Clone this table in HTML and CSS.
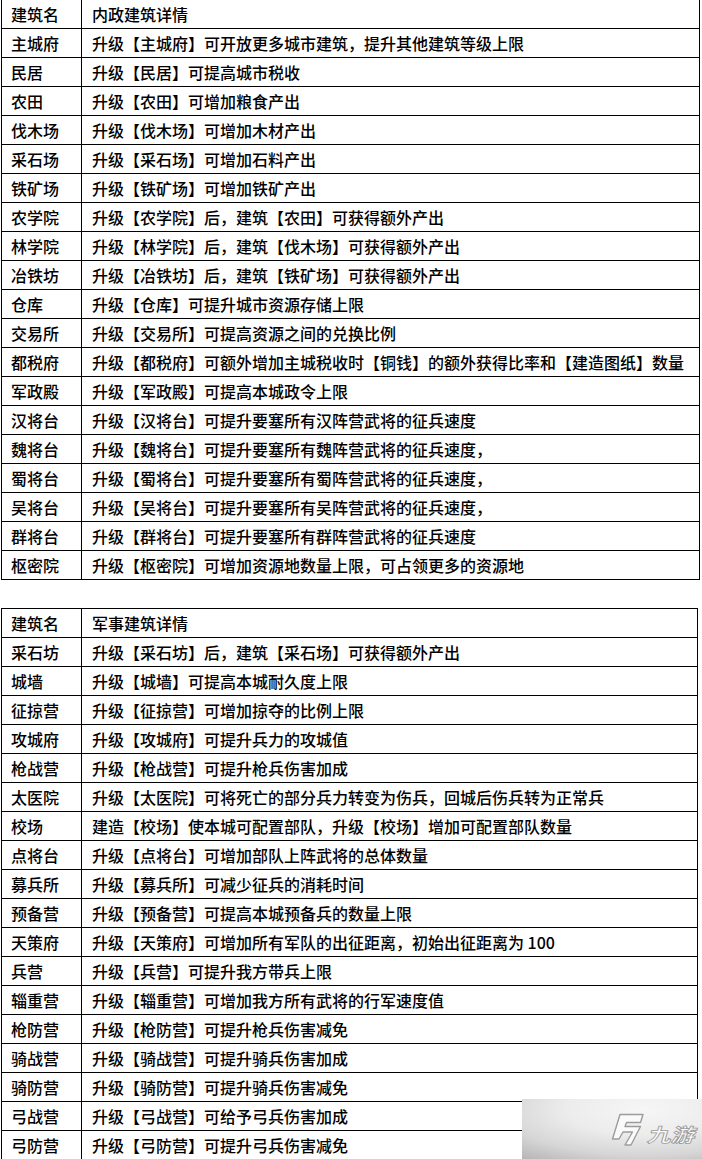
FILE: index.html
```html
<!DOCTYPE html>
<html lang="zh-CN">
<head>
<meta charset="utf-8">
<title>建筑详情</title>
<link rel="stylesheet" href="styles.css">
</head>
<body>
<div class="page">
  <table class="grid grid-first">
    <colgroup><col class="c-name"><col class="c-desc"></colgroup>
    <tbody>
      <tr><td>建筑名</td><td>内政建筑详情</td></tr>
      <tr><td>主城府</td><td>升级【主城府】可开放更多城市建筑，提升其他建筑等级上限</td></tr>
      <tr><td>民居</td><td>升级【民居】可提高城市税收</td></tr>
      <tr><td>农田</td><td>升级【农田】可增加粮食产出</td></tr>
      <tr><td>伐木场</td><td>升级【伐木场】可增加木材产出</td></tr>
      <tr><td>采石场</td><td>升级【采石场】可增加石料产出</td></tr>
      <tr><td>铁矿场</td><td>升级【铁矿场】可增加铁矿产出</td></tr>
      <tr><td>农学院</td><td>升级【农学院】后，建筑【农田】可获得额外产出</td></tr>
      <tr><td>林学院</td><td>升级【林学院】后，建筑【伐木场】可获得额外产出</td></tr>
      <tr><td>冶铁坊</td><td>升级【冶铁坊】后，建筑【铁矿场】可获得额外产出</td></tr>
      <tr><td>仓库</td><td>升级【仓库】可提升城市资源存储上限</td></tr>
      <tr><td>交易所</td><td>升级【交易所】可提高资源之间的兑换比例</td></tr>
      <tr><td>都税府</td><td>升级【都税府】可额外增加主城税收时【铜钱】的额外获得比率和【建造图纸】数量</td></tr>
      <tr><td>军政殿</td><td>升级【军政殿】可提高本城政令上限</td></tr>
      <tr><td>汉将台</td><td>升级【汉将台】可提升要塞所有汉阵营武将的征兵速度</td></tr>
      <tr><td>魏将台</td><td>升级【魏将台】可提升要塞所有魏阵营武将的征兵速度，</td></tr>
      <tr><td>蜀将台</td><td>升级【蜀将台】可提升要塞所有蜀阵营武将的征兵速度，</td></tr>
      <tr><td>吴将台</td><td>升级【吴将台】可提升要塞所有吴阵营武将的征兵速度，</td></tr>
      <tr><td>群将台</td><td>升级【群将台】可提升要塞所有群阵营武将的征兵速度</td></tr>
      <tr><td>枢密院</td><td>升级【枢密院】可增加资源地数量上限，可占领更多的资源地</td></tr>
    </tbody>
  </table>

  <table class="grid grid-second">
    <colgroup><col class="c-name"><col class="c-desc"></colgroup>
    <tbody>
      <tr><td>建筑名</td><td>军事建筑详情</td></tr>
      <tr><td>采石坊</td><td>升级【采石坊】后，建筑【采石场】可获得额外产出</td></tr>
      <tr><td>城墙</td><td>升级【城墙】可提高本城耐久度上限</td></tr>
      <tr><td>征掠营</td><td>升级【征掠营】可增加掠夺的比例上限</td></tr>
      <tr><td>攻城府</td><td>升级【攻城府】可提升兵力的攻城值</td></tr>
      <tr><td>枪战营</td><td>升级【枪战营】可提升枪兵伤害加成</td></tr>
      <tr><td>太医院</td><td>升级【太医院】可将死亡的部分兵力转变为伤兵，回城后伤兵转为正常兵</td></tr>
      <tr><td>校场</td><td>建造【校场】使本城可配置部队，升级【校场】增加可配置部队数量</td></tr>
      <tr><td>点将台</td><td>升级【点将台】可增加部队上阵武将的总体数量</td></tr>
      <tr><td>募兵所</td><td>升级【募兵所】可减少征兵的消耗时间</td></tr>
      <tr><td>预备营</td><td>升级【预备营】可提高本城预备兵的数量上限</td></tr>
      <tr><td>天策府</td><td>升级【天策府】可增加所有军队的出征距离，初始出征距离为 100</td></tr>
      <tr><td>兵营</td><td>升级【兵营】可提升我方带兵上限</td></tr>
      <tr><td>辎重营</td><td>升级【辎重营】可增加我方所有武将的行军速度值</td></tr>
      <tr><td>枪防营</td><td>升级【枪防营】可提升枪兵伤害减免</td></tr>
      <tr><td>骑战营</td><td>升级【骑战营】可提升骑兵伤害加成</td></tr>
      <tr><td>骑防营</td><td>升级【骑防营】可提升骑兵伤害减免</td></tr>
      <tr><td>弓战营</td><td>升级【弓战营】可给予弓兵伤害加成</td></tr>
      <tr><td>弓防营</td><td>升级【弓防营】可提升弓兵伤害减免</td></tr>
    </tbody>
  </table>

  <div class="watermark">
    <svg class="wm-icon" width="34" height="34" viewBox="0 0 34 34">
      <path d="M9 1.5 L32 1.5 L29.5 9.5 L15.5 9.5 L14 13.5 L29.5 13.5 L20 32 L14 32 L21.5 19 L12 19 L8 26 L1.5 26 Z" fill="#fafafa" stroke="#9c9c9c" stroke-width="1.4" stroke-linejoin="round"/>
    </svg>
    <span class="wm-text">九游</span>
  </div>
</div>
</body>
</html>
```

FILE: styles.css
```css
html, body {
  margin: 0;
  padding: 0;
  background: #ffffff;
}

body {
  font-family: "Noto Sans CJK SC", "Noto Sans", sans-serif;
  font-size: 16px;
  font-weight: 500;
  color: #000000;
}

.page {
  position: relative;
  width: 702px;
  height: 1159px;
  overflow: hidden;
}

.grid {
  border-collapse: separate;
  border-spacing: 0;
  table-layout: fixed;
  border-left: 1px solid #000;
  border-top: 1px solid #000;
  margin-left: 1px;
}

.grid-first {
  width: 699px;
  margin-top: -1px;
}

.grid-second {
  width: 697px;
  margin-top: 28px;
}

.c-name {
  width: 80px;
}

.grid td {
  border-right: 1px solid #000;
  border-bottom: 1px solid #000;
  height: 28px;
  padding: 0 0 0 9px;
  line-height: 28px;
  white-space: nowrap;
  overflow: hidden;
  vertical-align: middle;
}

.grid td + td {
  padding-left: 10px;
}

.watermark {
  position: absolute;
  left: 522px;
  top: 1099px;
  width: 180px;
  height: 60px;
  background:
    radial-gradient(ellipse 110% 105% at 68% 18%, #f6f6f6 0%, #ececec 40%, #d6d6d6 72%, #b4b4b4 100%);
  display: flex;
  align-items: flex-start;
  padding: 14px 0 0 89px;
  box-sizing: border-box;
}

.wm-icon {
  display: block;
  flex: none;
}

.wm-text {
  display: block;
  margin: 11px 0 0 4px;
  font-family: "Noto Sans CJK SC", sans-serif;
  font-size: 19px;
  font-weight: 700;
  line-height: 20px;
  color: #fafafa;
  -webkit-text-stroke: 0.8px #9a9a9a;
  transform: skewX(-16deg) scaleX(1.25);
  transform-origin: left center;
  white-space: nowrap;
}
```
